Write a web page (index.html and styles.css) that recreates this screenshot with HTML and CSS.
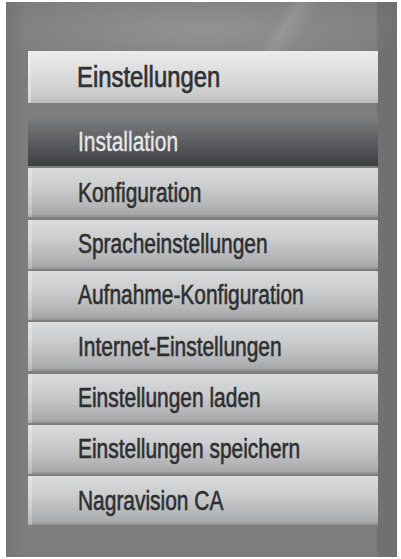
FILE: index.html
```html
<!DOCTYPE html>
<html lang="de">
<head>
<meta charset="utf-8">
<title>Einstellungen</title>
<link rel="stylesheet" href="styles.css">
</head>
<body>
<div class="panel">
  <div class="title-bar"><span class="label">Einstellungen</span></div>
  <ul class="menu">
    <li class="item selected"><span class="label">Installation</span></li>
    <li class="item"><span class="label">Konfiguration</span></li>
    <li class="item"><span class="label">Spracheinstellungen</span></li>
    <li class="item"><span class="label">Aufnahme-Konfiguration</span></li>
    <li class="item"><span class="label">Internet-Einstellungen</span></li>
    <li class="item"><span class="label">Einstellungen laden</span></li>
    <li class="item"><span class="label">Einstellungen speichern</span></li>
    <li class="item"><span class="label">Nagravision CA</span></li>
  </ul>
</div>
</body>
</html>
```

FILE: styles.css
```css
html, body {
  margin: 0;
  padding: 0;
  background: #ffffff;
}

body {
  font-family: "Liberation Sans", Arial, sans-serif;
}

.panel {
  box-sizing: border-box;
  margin: 2px 0 0 6px;
  width: 391px;
  height: 555px;
  padding: 49px 19px 0 22px;
  background:
    linear-gradient(120deg, rgba(255,255,255,0) 66%, rgba(255,255,255,0.10) 69%, rgba(255,255,255,0) 74%) top / 100% 60px no-repeat,
    radial-gradient(ellipse 55% 40px at 50% 28px, rgba(255,255,255,0.16), rgba(255,255,255,0)),
    linear-gradient(90deg, #747474 0px, #7e7e7e 20px, #7e7e7e 370px, #717171 372px, #6f6f6f 391px);
  background-color: #7b7b7b;
}

.label {
  display: inline-block;
  white-space: nowrap;
  transform-origin: left center;
}

.title-bar {
  box-sizing: border-box;
  height: 52px;
  display: flex;
  align-items: center;
  padding-left: 49px;
  background: linear-gradient(180deg, #ececec 0%, #dcdcdc 45%, #cbcbcb 85%, #b9b9b9 100%);
  box-shadow: inset 3px 0 0 rgba(255,255,255,0.35);
  color: #303133;
  font-size: 30px;
  -webkit-text-stroke: 0.7px #303133;
}

.title-bar .label {
  transform: scaleX(0.795);
}

.menu {
  list-style: none;
  margin: 14px 0 0 0;
  padding: 0;
  display: flex;
  flex-direction: column;
  gap: 2.33px;
}

.item {
  box-sizing: border-box;
  height: 49px;
  display: flex;
  align-items: center;
  padding-left: 50px;
  padding-top: 1px;
  background: linear-gradient(180deg, #dadbdc 0%, #cdcecf 35%, #b6b7b8 75%, #a2a3a4 100%);
  box-shadow: inset 4px 0 0 rgba(255,255,255,0.25), inset 0 -2px 0 rgba(0,0,0,0.08);
  color: #2e2f31;
  font-size: 27px;
  -webkit-text-stroke: 0.6px #2e2f31;
}

.item .label {
  transform: scaleX(0.775);
}

.item.selected {
  background: linear-gradient(180deg, #7c7d7e 0%, #6c6d6f 25%, #55575a 60%, #3d4043 100%);
  box-shadow: none;
  color: #e6e7e8;
  -webkit-text-stroke: 0.4px #e6e7e8;
}
```
